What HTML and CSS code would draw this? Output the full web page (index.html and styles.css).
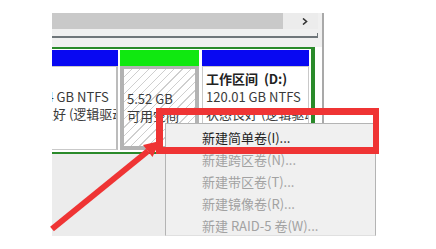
FILE: index.html
```html
<!DOCTYPE html>
<html>
<head>
<meta charset="utf-8">
<link rel="stylesheet" href="styles.css">
</head>
<body>
<div class="page">
  <div class="shot">
    <div class="scrollrow">
      <div class="thumb"></div>
      <div class="arrowbtn">
        <svg width="6" height="7" viewBox="0 0 6 7"><path d="M1 0.5 L4.5 3.5 L1 6.5" fill="none" stroke="#333" stroke-width="1.6"/></svg>
      </div>
    </div>
    <div class="tickline"></div>
    <div class="diskrow">
      <div class="ext">
        <div class="part p1">
          <div class="head blue"></div>
          <div class="body plain">
            <div class="ln">&nbsp;</div>
            <div class="ln">149.34 GB NTFS</div>
            <div class="ln">状态良好 (逻辑驱动器)</div>
          </div>
        </div>
        <div class="part p2">
          <div class="head green"></div>
          <div class="body hatch">
            <div class="ln">&nbsp;</div>
            <div class="ln">5.52 GB</div>
            <div class="ln">可用空间</div>
          </div>
        </div>
        <div class="part p3">
          <div class="head blue"></div>
          <div class="body plain">
            <div class="ln title">工作区间&nbsp; (D:)</div>
            <div class="ln">120.01 GB NTFS</div>
            <div class="ln">状态良好 (逻辑驱动器)</div>
          </div>
        </div>
      </div>
    </div>
    <div class="lower"></div>
  </div>

  <ul class="menu">
    <li class="item on">新建简单卷(I)...</li>
    <li class="item">新建跨区卷(N)...</li>
    <li class="item">新建带区卷(T)...</li>
    <li class="item">新建镜像卷(R)...</li>
    <li class="item">新建 RAID-5 卷(W)...</li>
  </ul>

  <div class="redbox"></div>
  <svg class="arrow" width="436" height="249" viewBox="0 0 436 249">
    <line x1="52" y1="229" x2="148" y2="151" stroke="#ef3434" stroke-width="6"/>
    <polygon points="160,141 152.5,157 143,145" fill="#ef3434"/>
  </svg>
</div>
</body>
</html>
```
FILE: styles.css
```css
html, body {
  margin: 0;
  padding: 0;
  background: #fff;
}
.page {
  position: relative;
  width: 436px;
  height: 249px;
  overflow: hidden;
  font-family: "Noto Sans CJK SC", "Noto Sans", sans-serif;
}
.shot {
  margin: 13px 0 0 52px;
  width: 270px;
  height: 223px;
  border-right: 2px solid #a9a9a9;
  background: #f0f0f0;
  display: flex;
  flex-direction: column;
  overflow: hidden;
}
.scrollrow {
  height: 16px;
  display: flex;
  flex: none;
}
.thumb {
  width: 231px;
  background: #c9c9c9;
}
.arrowbtn {
  width: 35px;
  background: #ececec;
  display: flex;
  align-items: center;
  justify-content: flex-end;
  padding-right: 10px;
  box-sizing: border-box;
}
.arrowbtn svg { display: block; }
.tickline {
  flex: none;
  margin-top: 4px;
  width: 265px;
  height: 3px;
  border-bottom: 2px solid #6f767a;
  border-right: 1px solid #6f767a;
}
.diskrow {
  flex: none;
  margin-top: 9px;
  height: 107px;
  background: #fff;
  display: flex;
}
.ext {
  width: 259px;
  border-top: 2px solid #2a8a2a;
  border-bottom: 2px solid #2a8a2a;
  border-right: 4px solid #2a8a2a;
  padding: 1px 0 2px 0;
  display: flex;
  gap: 2px;
}
.part {
  display: flex;
  flex-direction: column;
  flex: none;
}
.p1 { width: 108px; margin-left: -42px; }
.p2 { width: 79px; margin-right: 1px; }
.p3 { width: 107px; }
.head {
  height: 16px;
  flex: none;
}
.blue { background: #0808f2; }
.green { background: #10e810; }
.body {
  flex: 1;
  overflow: hidden;
  white-space: nowrap;
  font-size: 13px;
  line-height: 17.5px;
  color: #3a3a3a;
  padding: 3px 0 0 3px;
}
.plain {
  background: #fff;
  border: 1px solid #c9c9c9;
}
.p1 .plain { border-right: 2px solid #bcbcbc; }
.hatch {
  border: 4px solid #b3b3b3;
  border-top-width: 3px;
  background: repeating-linear-gradient(135deg, #ffffff 0 5px, #cfcfcf 5px 6px);
}
.title {
  font-weight: bold;
  color: #222;
}
.lower {
  flex: 1;
  background: #ececec;
}
.menu {
  position: absolute;
  left: 165px;
  top: 123px;
  width: 211px;
  height: 113px;
  margin: 0;
  padding: 3px 0 0 0;
  box-sizing: border-box;
  list-style: none;
  background: #f0f0f0;
  border: 1px solid #b4b4b4;
  border-bottom-color: #e0e0e0;
}
.item {
  height: 22px;
  line-height: 22px;
  padding-left: 36px;
  font-size: 13px;
  color: #a2a2a2;
  white-space: nowrap;
}
.item.on {
  color: #1e1e1e;
}
.redbox {
  position: absolute;
  left: 156px;
  top: 108px;
  width: 223px;
  height: 46px;
  box-sizing: border-box;
  border: 7px solid #ef3434;
  border-right-width: 6px;
}
.arrow {
  position: absolute;
  left: 0;
  top: 0;
}
```
